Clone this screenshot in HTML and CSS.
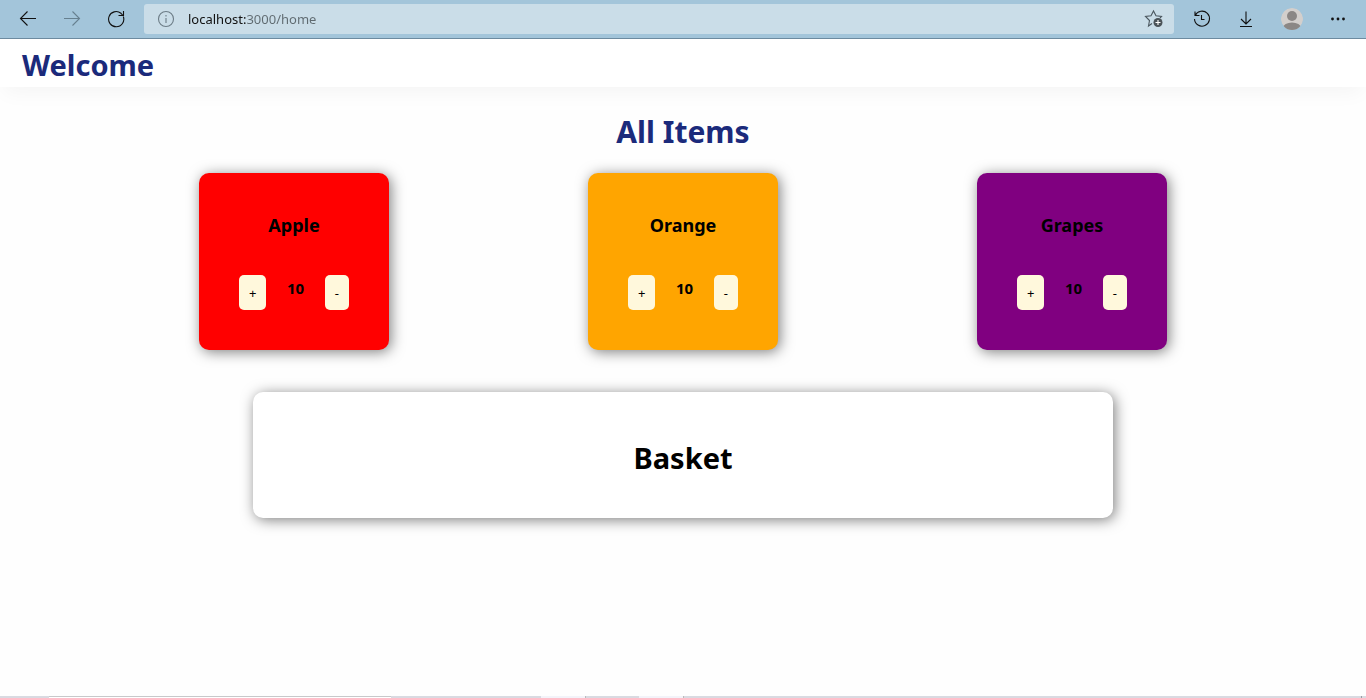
FILE: index.html
```html
<!DOCTYPE html>
<html lang="en">
<head>
<meta charset="utf-8">
<title>Home</title>
<link rel="stylesheet" href="styles.css">
</head>
<body>
<div class="toolbar">
  <button class="tool" aria-label="Back"><svg width="18" height="18" viewBox="0 0 18 18"><path d="M17 8.500H1.500M8.500 1.500 1.500 8.500 8.500 15.500"/></svg></button>
  <button class="tool tool-dim" aria-label="Forward"><svg width="18" height="18" viewBox="0 0 18 18"><path d="M1 8.500H16.500M9.500 1.500 16.500 8.500 9.500 15.500"/></svg></button>
  <button class="tool" aria-label="Refresh"><svg width="18" height="18" viewBox="0 0 18 18"><path d="M16.300 6.500A7.600 7.600 0 1 1 14 3.300L16 5.500M16.500 1V5.500H11.500"/></svg></button>
  <div class="address">
    <svg class="info" width="18" height="18" viewBox="0 0 18 18"><circle cx="9" cy="9" r="7.500"/><path d="M9 8V13M9 5V6.500"/></svg>
    <input class="url" type="text" aria-label="Address" value="localhost:3000/home">
    <button class="star" aria-label="Add to favorites"><svg width="20" height="20" viewBox="0 0 20 20"><path d="M8 14.500 4.500 17 5.500 11.500 1.500 7.500 7 6.800 9.500 2 12 6.800 17.500 7.500 16 9"/><circle class="badge" cx="14" cy="13.500" r="4.500"/><path class="badge-plus" d="M11.500 13.500H16.500M14 11V16"/></svg></button>
  </div>
  <button class="tool" aria-label="History"><svg width="18" height="18" viewBox="0 0 18 18"><path d="M2.200 5.500A7.500 7.500 0 1 1 1.500 9M2 1.500V5.500H6.500M8.500 5V9.500H11.500"/></svg></button>
  <button class="tool" aria-label="Downloads"><svg width="18" height="18" viewBox="0 0 18 18"><path d="M9 1.500V14M4 9 9 14 14 9M3 16.500H15"/></svg></button>
  <button class="tool tool-wide" aria-label="Profile"><svg class="avatar" width="22" height="22" viewBox="0 0 22 22"><defs><clipPath id="face"><circle cx="11" cy="11" r="11"/></clipPath></defs><g clip-path="url(#face)"><circle class="avatar-bg" cx="11" cy="11" r="11"/><circle class="avatar-fg" cx="11" cy="8" r="5"/><ellipse class="avatar-fg" cx="11" cy="20" rx="9" ry="5.500"/></g></svg></button>
  <button class="tool" aria-label="Settings and more"><svg class="dots" width="18" height="18" viewBox="0 0 18 18"><circle cx="3.500" cy="9" r="1.400"/><circle cx="9" cy="9" r="1.400"/><circle cx="14.500" cy="9" r="1.400"/></svg></button>
</div>
<header class="header"><h1 class="title">Welcome</h1></header>
<main class="main">
  <h1 class="title title-center">All Items</h1>
  <div class="items">
    <section class="card apple">
      <h3 class="name">Apple</h3>
      <div class="controls"><button class="step" aria-label="Add apple">+</button><span class="count">10</span><button class="step" aria-label="Remove apple">-</button></div>
    </section>
    <section class="card orange">
      <h3 class="name">Orange</h3>
      <div class="controls"><button class="step" aria-label="Add orange">+</button><span class="count">10</span><button class="step" aria-label="Remove orange">-</button></div>
    </section>
    <section class="card grapes">
      <h3 class="name">Grapes</h3>
      <div class="controls"><button class="step" aria-label="Add grapes">+</button><span class="count">10</span><button class="step" aria-label="Remove grapes">-</button></div>
    </section>
  </div>
  <section class="basket"><h1 class="basket-title">Basket</h1></section>
</main>
<div class="taskbar"><div class="search"></div><div class="app app-first"></div><div class="app"></div><div class="edge"></div></div>
</body>
</html>
```
FILE: styles.css
```css
* { box-sizing: border-box; }
body {
  margin: 0;
  min-height: 100vh;
  display: flex;
  flex-direction: column;
  background: #fefefe;
  color: #000;
  font-family: "Segoe UI", "Noto Sans", sans-serif;
}
h1, h3 { margin: 0; }
button { font-family: inherit; border: 0; padding: 0; background: none; }
svg { display: block; fill: none; stroke: #111; stroke-width: 1.1; }

.toolbar {
  display: flex;
  align-items: center;
  height: 39px;
  padding: 0 6px;
  background: #a3c5da;
  border-bottom: 1px solid #6d8ba0;
}
.tool {
  display: flex;
  align-items: center;
  justify-content: center;
  width: 44px;
  height: 36px;
}
.tool-wide { width: 48px; }
.tool-dim svg { stroke: #66808f; }
.address {
  flex: 1;
  display: flex;
  align-items: center;
  height: 30px;
  margin: 0 6px;
  padding: 0 10px 0 13px;
  background: #cadde8;
  border-radius: 3px;
}
.info { stroke: #6c7c86; }
.url {
  flex: 1;
  min-width: 0;
  margin-left: 13px;
  padding: 0;
  border: 0;
  outline: 0;
  font-family: "Segoe UI", "Noto Sans", sans-serif;
  font-size: 13px;
  line-height: 20px;
  color: transparent;
  background: linear-gradient(to right, #111 59px, #5f6a70 59px);
  -webkit-background-clip: text;
  background-clip: text;
}
.star svg { stroke: #4b575f; }
.star .badge { fill: #4b5358; stroke: none; }
.star .badge-plus { stroke: #fff; }
.avatar { stroke: none; }
.avatar-bg { fill: #d3cfcc; }
.avatar-fg { fill: #8b8785; }
.dots { fill: #111; stroke: none; }

.header {
  height: 48px;
  padding: 3px 22px 0;
  background: #fff;
  box-shadow: 0 10px 20px -4px rgba(0, 0, 0, 0.04);
}
.title {
  color: #1b2a7b;
  font-size: 29px;
  line-height: 46px;
}
.main {
  flex: 1;
  display: flex;
  flex-direction: column;
  padding-top: 22px;
}
.title-center { font-size: 30px; text-align: center; }
.items {
  display: flex;
  justify-content: space-evenly;
  margin-top: 18px;
}
.card {
  width: 190px;
  padding: 40px;
  border-radius: 10px;
  box-shadow: 2px 2px 14px rgba(0, 0, 0, 0.5);
}
.apple { background: red; }
.orange { background: orange; }
.grapes { background: purple; }
.name {
  font-size: 18px;
  line-height: 24px;
  text-align: center;
}
.controls {
  display: flex;
  justify-content: space-between;
  margin-top: 38px;
}
.step {
  height: 35px;
  padding: 0 10px;
  border-radius: 5px;
  background: cornsilk;
  color: #000;
  font-size: 13px;
}
.count {
  font-size: 15px;
  font-weight: bold;
  line-height: 26px;
}
.basket {
  width: 63%;
  margin: 42px auto 0;
  padding: 41px 40px 39px;
  background: #fff;
  border-radius: 10px;
  box-shadow: 2px 2px 14px rgba(0, 0, 0, 0.5);
  text-align: center;
}
.basket-title { padding-top: 2px; height: 46px; font-size: 29px; line-height: 46px; }

.taskbar {
  display: flex;
  height: 2px;
  padding-left: 49px;
  background: #d9dae1;
}
.search { width: 342px; background: #fff; border-top: 1px solid #c8c8ca; }
.app { width: 45px; margin-left: 53px; background: #f3f3f9; border-right: 1px solid #bbb; }
.app-first { margin-left: 150px; }
.edge { width: 1px; margin: 0 4px 0 auto; background: #9b9ca3; }
```
